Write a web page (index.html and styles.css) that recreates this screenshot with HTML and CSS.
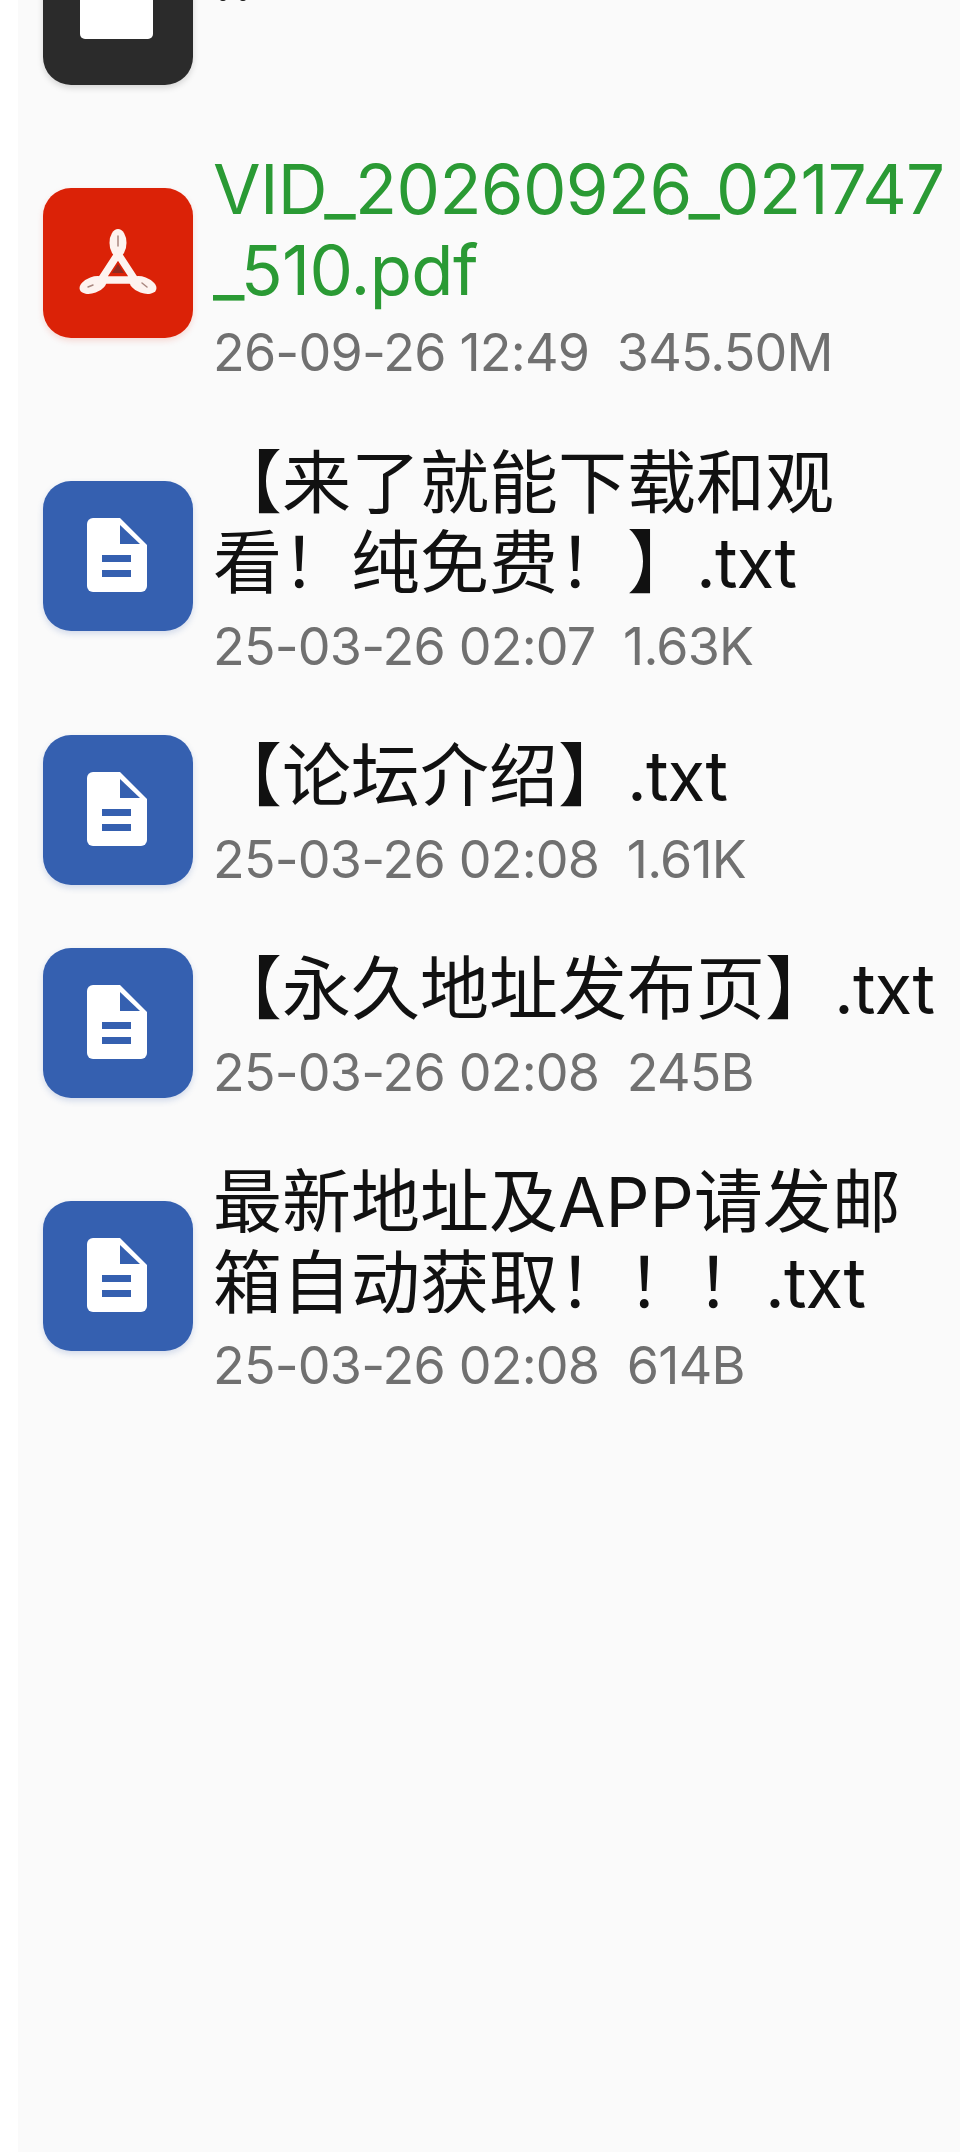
FILE: index.html
```html
<!DOCTYPE html>
<html lang="zh-CN">
<head>
    <meta charset="UTF-8">
    <meta name="viewport" content="width=device-width, initial-scale=1.0">
    <title>文件列表</title>
    <link rel="stylesheet" href="styles.css">
</head>
<body>
    <!-- File list, scrolled so the first row is cut off -->
    <main class="file-list">
        <div class="file-row">
            <div class="file-icon icon-dark">
                <svg viewBox="0 0 150 150" width="150" height="150">
                    <path d="M37 20H110V99a5 5 0 0 1-5 5H42a5 5 0 0 1-5-5Z" fill="#fff"/>
                </svg>
            </div>
            <div class="file-text">
                <div class="file-name">..</div>
                <div class="file-meta">&nbsp;</div>
            </div>
        </div>

        <div class="file-row">
            <div class="file-icon icon-pdf">
                <svg viewBox="0 0 150 150" width="150" height="150">
                    <g fill="#fdf3ef">
                        <ellipse cx="75" cy="55" rx="8.5" ry="14"/>
                        <ellipse cx="50" cy="97" rx="14" ry="8" transform="rotate(-20 50 97)"/>
                        <ellipse cx="100" cy="97" rx="14" ry="8" transform="rotate(20 100 97)"/>
                    </g>
                    <path d="M75 66L58 92H92Z" fill="none" stroke="#fdf3ef" stroke-width="7.5" stroke-linejoin="round"/>
                    <path d="M75 76L69 85H81Z" fill="#8e2a20"/>
                    <g stroke="#a9877f" stroke-width="1.5" stroke-linecap="round">
                        <path d="M75 48V58"/>
                        <path d="M45 99L50 97"/>
                        <path d="M99 95L104 99"/>
                    </g>
                </svg>
            </div>
            <div class="file-text">
                <div class="file-name name-active">VID_20260926_021747_510.pdf</div>
                <div class="file-meta">26-09-26 12:49  345.50M</div>
            </div>
        </div>

        <div class="file-row">
            <div class="file-icon icon-doc">
                <svg viewBox="0 0 150 150" width="150" height="150"><use href="#doc-glyph"/></svg>
            </div>
            <div class="file-text">
                <div class="file-name">【来了就能下载和观看！纯免费！】<span class="file-ext">.txt</span></div>
                <div class="file-meta">25-03-26 02:07  1.63K</div>
            </div>
        </div>

        <div class="file-row">
            <div class="file-icon icon-doc">
                <svg viewBox="0 0 150 150" width="150" height="150"><use href="#doc-glyph"/></svg>
            </div>
            <div class="file-text">
                <div class="file-name">【论坛介绍】<span class="file-ext">.txt</span></div>
                <div class="file-meta">25-03-26 02:08  1.61K</div>
            </div>
        </div>

        <div class="file-row">
            <div class="file-icon icon-doc">
                <svg viewBox="0 0 150 150" width="150" height="150"><use href="#doc-glyph"/></svg>
            </div>
            <div class="file-text">
                <div class="file-name">【永久地址发布页】<span class="file-ext">.txt</span></div>
                <div class="file-meta">25-03-26 02:08  245B</div>
            </div>
        </div>

        <div class="file-row">
            <div class="file-icon icon-doc">
                <svg viewBox="0 0 150 150" width="150" height="150"><use href="#doc-glyph"/></svg>
            </div>
            <div class="file-text">
                <div class="file-name">最新地址及APP请发邮箱自动获取！！！<span class="file-ext">.txt</span></div>
                <div class="file-meta">25-03-26 02:08  614B</div>
            </div>
        </div>
    </main>

    <svg class="svg-defs" width="0" height="0">
        <symbol id="doc-glyph" viewBox="0 0 150 150">
            <path d="M50 37H77L104 64V105a6 6 0 0 1-6 6H50a6 6 0 0 1-6-6V43a6 6 0 0 1 6-6Z" fill="#fff"/>
            <path d="M77 44L97 63H77Z" fill="#3560b0"/>
            <rect x="59" y="74" width="29" height="7" fill="#3560b0"/>
            <rect x="59" y="89" width="29" height="7" fill="#3560b0"/>
        </symbol>
    </svg>
</body>
</html>
```

FILE: styles.css
```css
html, body {
    margin: 0;
    padding: 0;
    background-color: #fff;
}
body {
    height: 2152px;
    overflow: hidden;
    font-family: 'Inter', 'Noto Sans CJK SC', sans-serif;
}
.file-list {
    margin-top: -97px;
    margin-left: 18px;
    height: 2249px;
    background-color: #fafafa;
}
.file-row {
    display: flex;
    align-items: center;
    gap: 20px;
    padding: 17px 10px 17px 25px;
}
.file-icon {
    flex: none;
    width: 150px;
    height: 150px;
    border-radius: 28px;
    overflow: hidden;
}
.file-icon svg {
    display: block;
}
.icon-dark {
    background-color: #2b2b2b;
    box-shadow: 0 3px 6px rgba(0, 0, 0, 0.15);
}
.icon-pdf {
    background-color: #db2207;
    box-shadow: 0 3px 6px rgba(219, 34, 7, 0.15);
}
.icon-doc {
    background-color: #3560b0;
    box-shadow: 0 3px 6px rgba(53, 96, 176, 0.2);
}
.file-text {
    flex: 1;
    min-width: 0;
    padding-top: 16px;
}
.file-name {
    font-size: 69px;
    line-height: 80.5px;
    color: #111;
    word-break: break-all;
}
.name-active {
    color: #2a9a34;
    letter-spacing: -0.65px;
}
.file-ext {
    letter-spacing: -1px;
}
.file-meta {
    padding-top: 3px;
    font-size: 52px;
    line-height: 79.5px;
    color: #707070;
    letter-spacing: -0.8px;
    white-space: pre;
}
.svg-defs {
    display: block;
}
```
